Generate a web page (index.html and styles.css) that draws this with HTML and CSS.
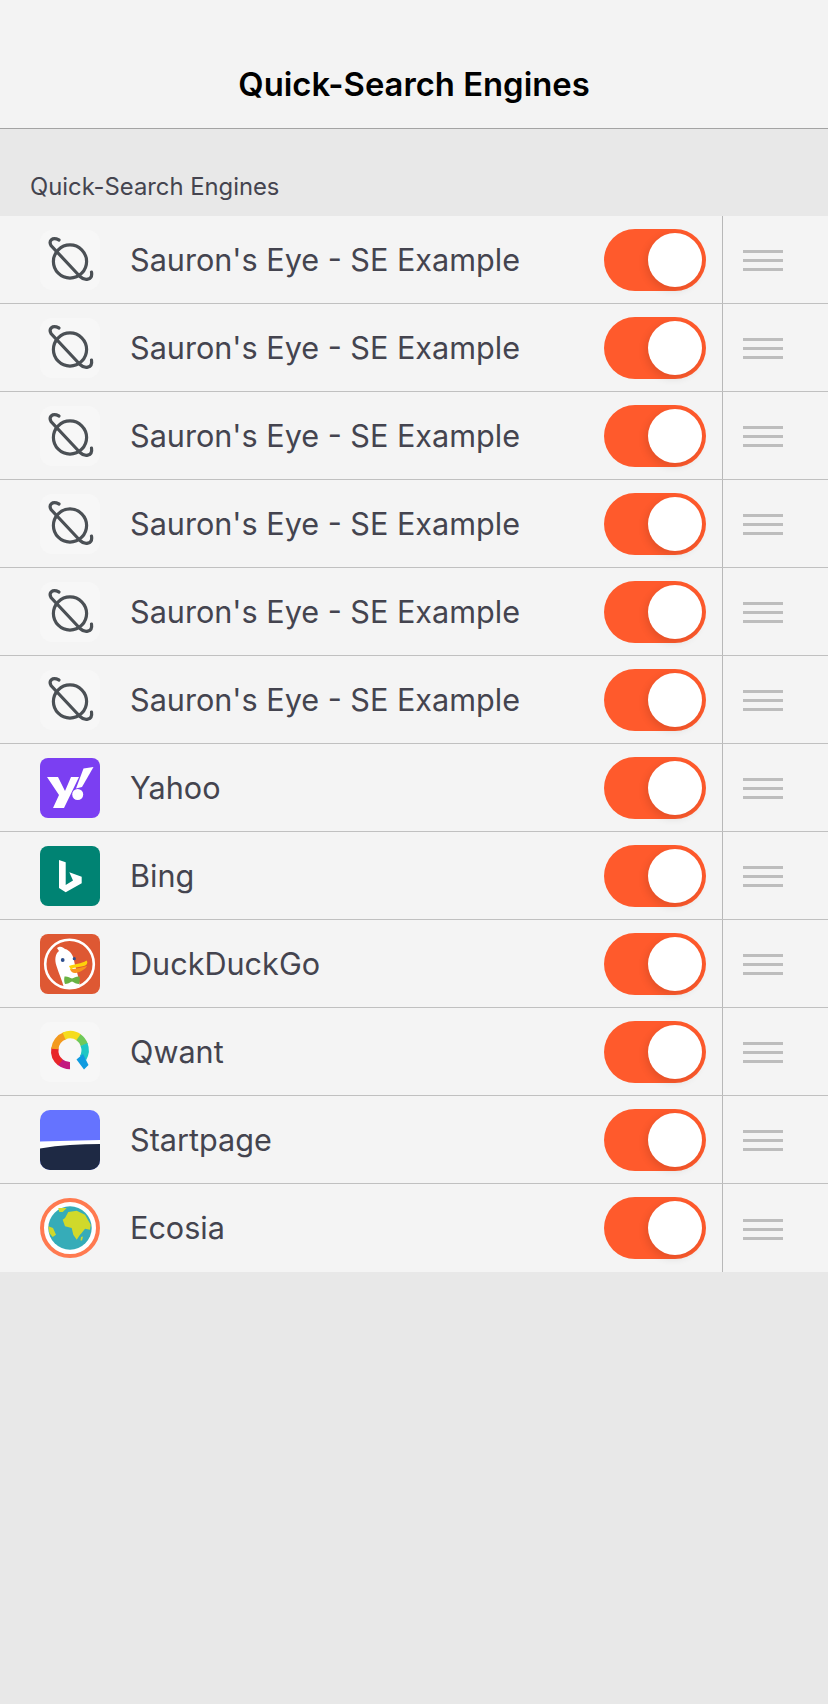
FILE: index.html
```html
<!DOCTYPE html>
<html lang="en">
<head>
  <meta charset="UTF-8">
  <title>Quick-Search Engines</title>
  <link rel="stylesheet" href="styles.css">
</head>
<body>

  <svg class="defs" width="0" height="0" aria-hidden="true">
    <symbol id="icon-eye" viewBox="0 0 60 60">
      <rect width="60" height="60" rx="12" fill="#f7f7f7"/>
      <g fill="none" stroke="#4b5055" stroke-width="3.2" stroke-linecap="round">
        <circle cx="30" cy="31.5" r="16.6"/>
        <path d="M19 10C12 6.5 8.5 11 11 15.5L40 46.5C44 50.5 53 51 51.5 42"/>
      </g>
    </symbol>
  </svg>

  <header class="nav-bar">
    <h1>Quick-Search Engines</h1>
  </header>

  <h2 class="section-label">Quick-Search Engines</h2>

  <ul class="engine-list">
    <li class="engine">
      <svg class="engine-icon"><use href="#icon-eye"/></svg>
      <span class="engine-name">Sauron's Eye - SE Example</span>
      <span class="switch"><span class="knob"></span></span>
      <span class="handle"><i></i><i></i><i></i></span>
    </li>
    <li class="engine">
      <svg class="engine-icon"><use href="#icon-eye"/></svg>
      <span class="engine-name">Sauron's Eye - SE Example</span>
      <span class="switch"><span class="knob"></span></span>
      <span class="handle"><i></i><i></i><i></i></span>
    </li>
    <li class="engine">
      <svg class="engine-icon"><use href="#icon-eye"/></svg>
      <span class="engine-name">Sauron's Eye - SE Example</span>
      <span class="switch"><span class="knob"></span></span>
      <span class="handle"><i></i><i></i><i></i></span>
    </li>
    <li class="engine">
      <svg class="engine-icon"><use href="#icon-eye"/></svg>
      <span class="engine-name">Sauron's Eye - SE Example</span>
      <span class="switch"><span class="knob"></span></span>
      <span class="handle"><i></i><i></i><i></i></span>
    </li>
    <li class="engine">
      <svg class="engine-icon"><use href="#icon-eye"/></svg>
      <span class="engine-name">Sauron's Eye - SE Example</span>
      <span class="switch"><span class="knob"></span></span>
      <span class="handle"><i></i><i></i><i></i></span>
    </li>
    <li class="engine">
      <svg class="engine-icon"><use href="#icon-eye"/></svg>
      <span class="engine-name">Sauron's Eye - SE Example</span>
      <span class="switch"><span class="knob"></span></span>
      <span class="handle"><i></i><i></i><i></i></span>
    </li>

    <li class="engine">
      <svg class="engine-icon" viewBox="0 0 60 60">
        <rect width="60" height="60" rx="8" fill="#7b3ff2"/>
        <path fill="#fff" d="M7 19H18L25 33L31 19H39L24 50H13L19 37Z"/>
        <path fill="#fff" d="M43.5 10.5L53.5 9L42 29L36 30.5Z"/>
        <circle cx="37.7" cy="36.5" r="5.5" fill="#fff"/>
      </svg>
      <span class="engine-name">Yahoo</span>
      <span class="switch"><span class="knob"></span></span>
      <span class="handle"><i></i><i></i><i></i></span>
    </li>

    <li class="engine">
      <svg class="engine-icon" viewBox="0 0 60 60">
        <rect width="60" height="60" rx="8" fill="#008373"/>
        <path fill="#fff" d="M19 14L25.7 16.3V39L33 34.5L29.3 26.3L41.7 30.7V37.3L25.7 46.3L19 42Z"/>
      </svg>
      <span class="engine-name">Bing</span>
      <span class="switch"><span class="knob"></span></span>
      <span class="handle"><i></i><i></i><i></i></span>
    </li>

    <li class="engine">
      <svg class="engine-icon" viewBox="0 0 60 60">
        <rect width="60" height="60" rx="8" fill="#de5833"/>
        <circle cx="29.5" cy="30" r="24.3" fill="none" stroke="#fff" stroke-width="2.6"/>
        <path fill="#fff" d="M17 14C20 11.5 23 13 25 15C30 16 34 22 34.5 29L38 42L40 53C34 55.5 28 55.5 24 54C22 46 19 40 16.5 32C14.5 26 15 20 19 17Z"/>
        <circle cx="22.7" cy="26" r="1.9" fill="#2d4f8e"/>
        <circle cx="34.3" cy="24.7" r="1.6" fill="#2d4f8e"/>
        <path fill="#f8961e" d="M31 35C36 35 42 33 47 32C46 35 40 38 36 39C33 39.5 31 38 30 35Z"/>
        <path fill="#fdd20a" d="M29 32C35 30 41 30 46.5 26.5C48 28 47.5 31 44 32C41 33 37 33 33 34L31 36Z"/>
        <path fill="#6ab344" d="M24.5 42.5C27 42 30 43.5 32 44.5C34 43.5 37 42 39.5 42.5C40 45 40 48 39 50C36.5 50 34 48.5 32 47.5C30 48.5 27.5 50 25 50C24 48 24 45 24.5 42.5Z"/>
      </svg>
      <span class="engine-name">DuckDuckGo</span>
      <span class="switch"><span class="knob"></span></span>
      <span class="handle"><i></i><i></i><i></i></span>
    </li>

    <li class="engine">
      <svg class="engine-icon" viewBox="0 0 60 60">
        <rect width="60" height="60" rx="10" fill="#f7f7f7"/>
        <g fill="none" stroke-width="7.4">
          <path stroke="#c2187f" d="M30 43.6A15.3 15.3 0 0 1 20 40"/>
          <path stroke="#e8262a" d="M20.5 40.5A15.3 15.3 0 0 1 15 26"/>
          <path stroke="#f39a1f" d="M14.8 27A15.3 15.3 0 0 1 25 13.8"/>
          <path stroke="#f5dc1e" d="M24 14A15.3 15.3 0 0 1 39 15.6"/>
          <path stroke="#6fc95a" d="M38.5 15.2A15.3 15.3 0 0 1 44.3 23"/>
          <path stroke="#1fc7c4" d="M44 22.5A15.3 15.3 0 0 1 43 36"/>
        </g>
        <path fill="#0f9be0" d="M36.5 37.5L43 32L48.5 43L44 47.5Z"/>
      </svg>
      <span class="engine-name">Qwant</span>
      <span class="switch"><span class="knob"></span></span>
      <span class="handle"><i></i><i></i><i></i></span>
    </li>

    <li class="engine">
      <svg class="engine-icon" viewBox="0 0 60 60">
        <rect width="60" height="60" rx="10" fill="#6573ff"/>
        <path fill="#1e2944" d="M0 36C20 34 40 33 60 33V50A10 10 0 0 1 50 60H10A10 10 0 0 1 0 50Z"/>
        <path fill="#fff" d="M0 31.5C20 31 40 30.5 60 30V34C40 34 20 35 0 38.5Z"/>
      </svg>
      <span class="engine-name">Startpage</span>
      <span class="switch"><span class="knob"></span></span>
      <span class="handle"><i></i><i></i><i></i></span>
    </li>

    <li class="engine">
      <svg class="engine-icon" viewBox="0 0 60 60">
        <circle cx="30" cy="30" r="28" fill="#fff" stroke="#ff7a50" stroke-width="4"/>
        <circle cx="30" cy="30" r="21.7" fill="#36acb8"/>
        <path fill="#d0d92b" d="M18.3 10L26.7 10L22.7 14L19.3 14ZM8.3 28.3L13 30L16 36.7L12.7 39L9.3 35ZM28.3 14L36.7 12.7L45 16.7L50.7 26.7L50 31.7L45 30.7L41.7 35L40 36.7L36.7 41.7L33.3 36.7L31.7 30L25 28.3L22.7 21.7L25 20ZM41 39L43 38.5L42 42.5L40.5 42.5Z"/>
      </svg>
      <span class="engine-name">Ecosia</span>
      <span class="switch"><span class="knob"></span></span>
      <span class="handle"><i></i><i></i><i></i></span>
    </li>
  </ul>

</body>
</html>
```

FILE: styles.css
```css
* {
  box-sizing: border-box;
}

body {
  margin: 0;
  background: #e8e8e8;
  color: #44444f;
  font-family: Inter, "Noto Sans", sans-serif;
}

.defs {
  position: absolute;
}

.nav-bar {
  height: 129px;
  padding-top: 64px;
  background: #f3f3f3;
  border-bottom: 1px solid #a3a3a3;
  text-align: center;
}

.nav-bar h1 {
  margin: 0;
  font-size: 32.8px;
  line-height: 40px;
  font-weight: 600;
  color: #000;
}

.section-label {
  height: 87px;
  margin: 0;
  padding: 43px 30px 0;
  font-size: 23.8px;
  line-height: 30px;
  font-weight: 400;
}

.engine-list {
  margin: 0;
  padding: 0;
  list-style: none;
  background: #f4f4f4;
}

.engine {
  display: flex;
  align-items: center;
  height: 88px;
  padding-left: 40px;
  border-bottom: 1px solid #c0c0c0;
}

.engine:last-child {
  border-bottom: none;
}

.engine-icon {
  flex: none;
  width: 60px;
  height: 60px;
}

.engine-name {
  flex: 1;
  margin-left: 30px;
  font-size: 30.6px;
  line-height: 40px;
}

.switch {
  flex: none;
  display: flex;
  justify-content: flex-end;
  align-items: center;
  width: 102px;
  height: 62px;
  margin-right: 16px;
  padding-right: 4px;
  border-radius: 31px;
  background: #ff5a2c;
}

.knob {
  width: 54px;
  height: 54px;
  border-radius: 50%;
  background: #fff;
  box-shadow: -2px 3px 8px rgba(0, 0, 0, 0.12);
}

.handle {
  flex: none;
  display: flex;
  flex-direction: column;
  justify-content: center;
  gap: 6px;
  align-self: stretch;
  width: 106px;
  padding: 2px 45px 0 20px;
  border-left: 1px solid #b8b8b8;
}

.handle i {
  display: block;
  height: 3px;
  background: #bdbdbd;
}
```
